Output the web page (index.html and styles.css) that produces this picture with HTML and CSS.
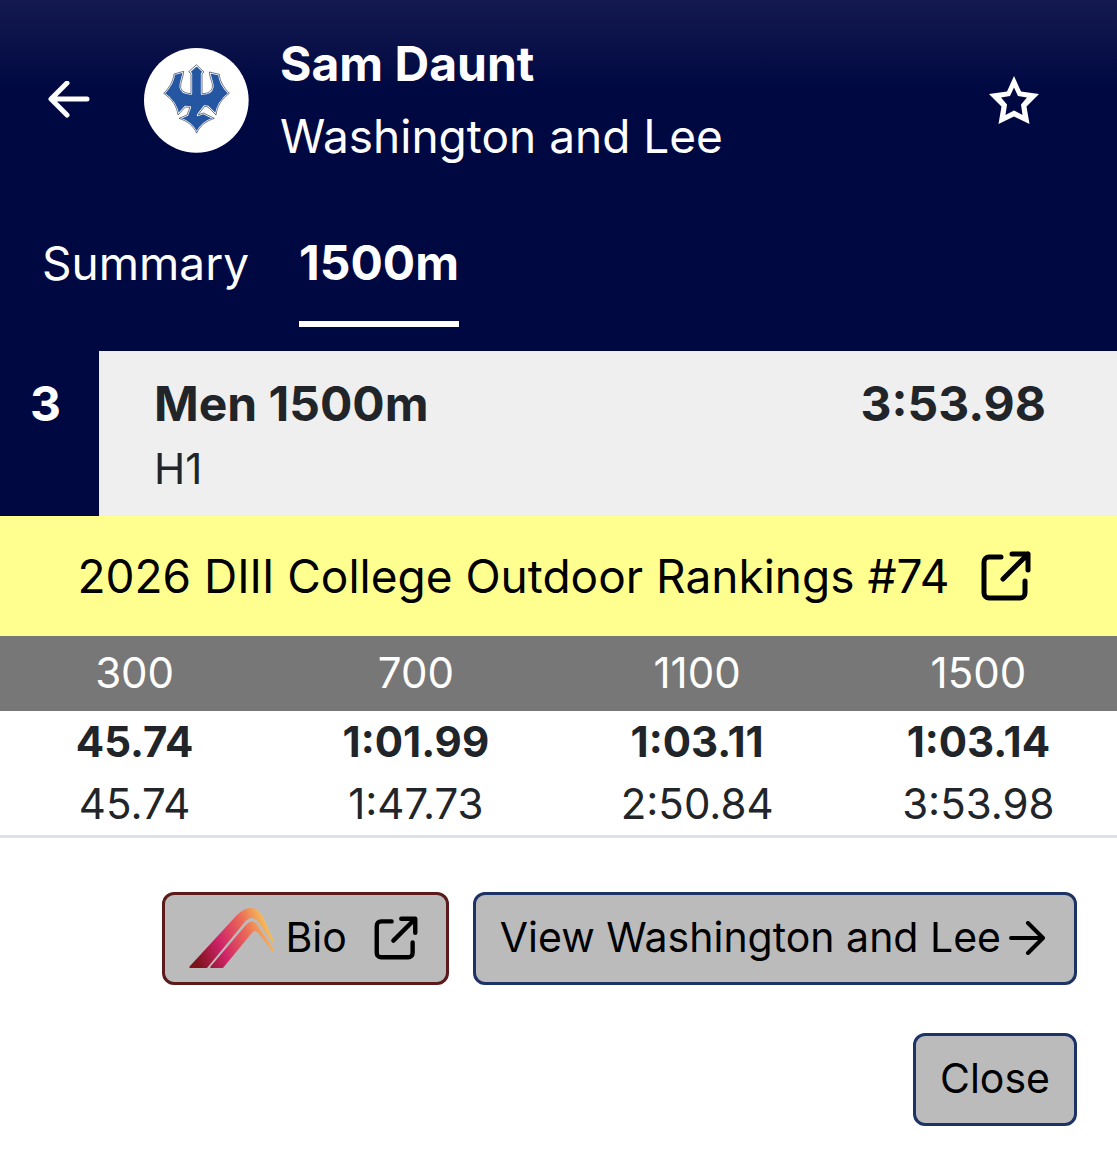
FILE: index.html
```html
<!DOCTYPE html>
<html lang="en">
<head>
<meta charset="utf-8">
<meta name="viewport" content="width=device-width, initial-scale=1">
<title>Sam Daunt – 1500m</title>
<link rel="stylesheet" href="styles.css">
</head>
<body>
<header class="header">
  <div class="athlete">
    <button class="icon-button" type="button" aria-label="Back">
      <svg class="back-icon" viewBox="0 0 42 38" aria-hidden="true"><path d="M39 18H4M19 2 3 18l16 16"/></svg>
    </button>
    <svg class="team-logo" viewBox="0 0 315 315" role="img" aria-label="Washington and Lee logo">
      <defs>
        <path id="trident" d="M125 14l22 21-6 5v60c18 0 29-7 31-19 3-13-8-26-9-46l30 7c1 20 13 40 30 57-21 16-36 35-40 65l-24-24-10-2-20 26 16-6 33 16c-27 9-43 23-53 44-10-21-26-35-53-44l24-10 9-23-14-1-22 24c-4-30-20-49-43-65 17-17 29-37 31-58l29-8c-1 21-11 34-9 48 2 12 14 18 31 19V40l-6-5z"/>
      </defs>
      <circle cx="157" cy="157" r="157" fill="#fff"/>
      <g transform="translate(33 37)">
        <use href="#trident" fill="#2556a2" stroke="#fff" stroke-width="7"/>
        <use href="#trident" stroke="#27324a" stroke-width="2"/>
      </g>
    </svg>
    <div class="athlete-text">
      <h1 class="athlete-name">Sam Daunt</h1>
      <p class="athlete-team">Washington and Lee</p>
    </div>
    <button class="icon-button" type="button" aria-label="Add to favorites">
      <svg class="star-icon" viewBox="0 0 50 48" aria-hidden="true"><path fill-rule="evenodd" d="M25 0l7 15.500 18 2.500-12.500 12.500L40.500 48 25 40.500 9.500 48l3-17.500L0 18l18-2.500zM25 11.500l-4 8.500-9 1.500 6 7L16.500 39l8.500-4.500 8.500 4.500L32 28.500l6-7L29 20z"/></svg>
    </button>
  </div>
  <nav class="tabs">
    <a class="tab" href="#summary">Summary</a>
    <a class="tab tab-active" href="#event" aria-current="page">1500m</a>
  </nav>
</header>
<main>
  <section class="result" id="event">
    <div class="place">3</div>
    <div class="result-body">
      <div>
        <h2 class="event-name">Men 1500m</h2>
        <p class="heat">H1</p>
      </div>
      <div class="event-name">3:53.98</div>
    </div>
  </section>
  <a class="ranking" href="#rankings">
    <span>2026 DIII College Outdoor Rankings #74</span>
    <svg class="external-icon external-large" viewBox="0 0 48 48" aria-hidden="true"><path d="M19 5H7a5 5 0 0 0-5 5v31a5 5 0 0 0 5 5h31a5 5 0 0 0 5-5V29M30 2h16v16M46 2 21 27"/></svg>
  </a>
  <div class="splits-wrap">
    <table class="splits">
      <thead><tr><th>300</th><th>700</th><th>1100</th><th>1500</th></tr></thead>
      <tbody>
        <tr class="lap"><td>45.74</td><td>1:01.99</td><td>1:03.11</td><td>1:03.14</td></tr>
        <tr class="total"><td>45.74</td><td>1:47.73</td><td>2:50.84</td><td>3:53.98</td></tr>
      </tbody>
    </table>
  </div>
  <div class="actions">
    <button class="button button-bio" type="button">
      <svg class="bio-logo" viewBox="0 0 86 60" aria-hidden="true">
        <defs><linearGradient id="warm" x1="10" y1="60" x2="84" y2="30" gradientUnits="userSpaceOnUse"><stop offset="0" stop-color="#7d121b"/><stop offset=".36" stop-color="#cf2468"/><stop offset=".72" stop-color="#ec6a58"/><stop offset="1" stop-color="#f5c05a"/></linearGradient></defs>
        <path fill="url(#warm)" d="M2 60c-2 0-2-1-1-2L48 7c10-10 21-9 26 2l10 22v4L70 15c-5-7-10-6-15 0L18 60z"/>
        <path fill="url(#warm)" d="M22 60c-1 0-1-1 0-2l34-40c5-6 9-6 13 0l15 22v4L70 26c-3-4-5-4-8 0L34 60z"/>
      </svg>
      <span>Bio</span>
      <svg class="external-icon bio-external" viewBox="0 0 48 48" aria-hidden="true"><path d="M19 5H7a5 5 0 0 0-5 5v31a5 5 0 0 0 5 5h31a5 5 0 0 0 5-5V29M30 2h16v16M46 2 21 27"/></svg>
    </button>
    <button class="button" type="button">
      <span>View Washington and Lee</span>
      <svg class="forward-icon" viewBox="0 0 37 34" aria-hidden="true"><path d="M2 17h32M19 2l15 15-15 15"/></svg>
    </button>
  </div>
  <div class="actions">
    <button class="button" type="button">Close</button>
  </div>
</main>
</body>
</html>
```
FILE: styles.css
```css
* { box-sizing: border-box; }
body { margin: 0; background: #fff; color: #212529; font: 42px/63px Inter, "Liberation Sans", sans-serif; }
h1, h2, p { margin: 0; font: inherit; }
button { font: inherit; cursor: pointer; }
a { color: inherit; text-decoration: none; }
svg { display: block; flex: none; fill: none; stroke-linecap: round; stroke-linejoin: round; }

.header { padding: 28px 42px 24px; color: #fff; background: #000842 linear-gradient(#141a4f, #000842 90px) no-repeat; font-size: 46px; line-height: 72px; }
.athlete { display: flex; align-items: center; }
.icon-button { flex: none; padding: 0 6px; border: 0; background: none; color: #fff; }
.back-icon { width: 42px; height: 38px; stroke: currentColor; stroke-width: 5; }
.star-icon { width: 50px; height: 48px; margin-right: 30px; fill: currentColor; }
.team-logo { width: 105px; height: 105px; margin: 0 31px 0 48px; }
.athlete-text { flex: 1; }
.athlete-name { font-size: 48px; font-weight: 700; }
.tabs { display: flex; gap: 50px; margin-top: 55px; }
.tab { padding-bottom: 22px; border-bottom: 6px solid transparent; }
.tab-active { border-color: #fff; font-size: 48px; font-weight: 700; }

.result { display: flex; }
.place { width: 99px; padding: 20px 8px 0 0; background: #000842; color: #fff; font-size: 48px; font-weight: 700; line-height: 66px; text-align: center; }
.result-body { flex: 1; display: flex; justify-content: space-between; padding: 20px 71px 16px 55px; background: #efefef; }
.event-name { font-size: 48px; font-weight: 700; line-height: 66px; }

.ranking { display: flex; align-items: center; justify-content: center; gap: 32px; padding: 24px 10px 24px 0; background: #ffff90; color: #000; font-size: 46px; line-height: 72px; }
.external-icon { stroke: currentColor; stroke-width: 5; overflow: visible; }
.external-large { width: 48px; height: 48px; }

.splits-wrap { overflow: hidden; }
.splits { table-layout: fixed; width: calc(100% + 8px); margin-left: -6px; border-collapse: collapse; text-align: center; }
.splits th { padding: 5px 0 7px; background: #777; color: #fff; font-weight: 400; }
.splits td { padding: 0; }
.lap { font-weight: 700; line-height: 62px; }
.total { border-bottom: 3px solid #dee2e6; line-height: 62px; }

.actions { display: flex; justify-content: flex-end; gap: 24px; padding: 0 40px; margin-bottom: 48px; }
.splits-wrap + .actions { margin-top: 54px; }
.button { display: flex; align-items: center; gap: 8px; padding: 11px 24px 13px; border: 3px solid #1d3365; border-radius: 12px; background: #bbb; color: #000; font-size: 41px; }
.button-bio { gap: 10px; border-color: #5c1a1c; }
.bio-logo { width: 86px; height: 60px; }
.bio-external { width: 42px; height: 42px; margin: 0 5px 0 18px; }
.forward-icon { width: 37px; height: 34px; margin-right: 4px; stroke: currentColor; stroke-width: 4; }
```
